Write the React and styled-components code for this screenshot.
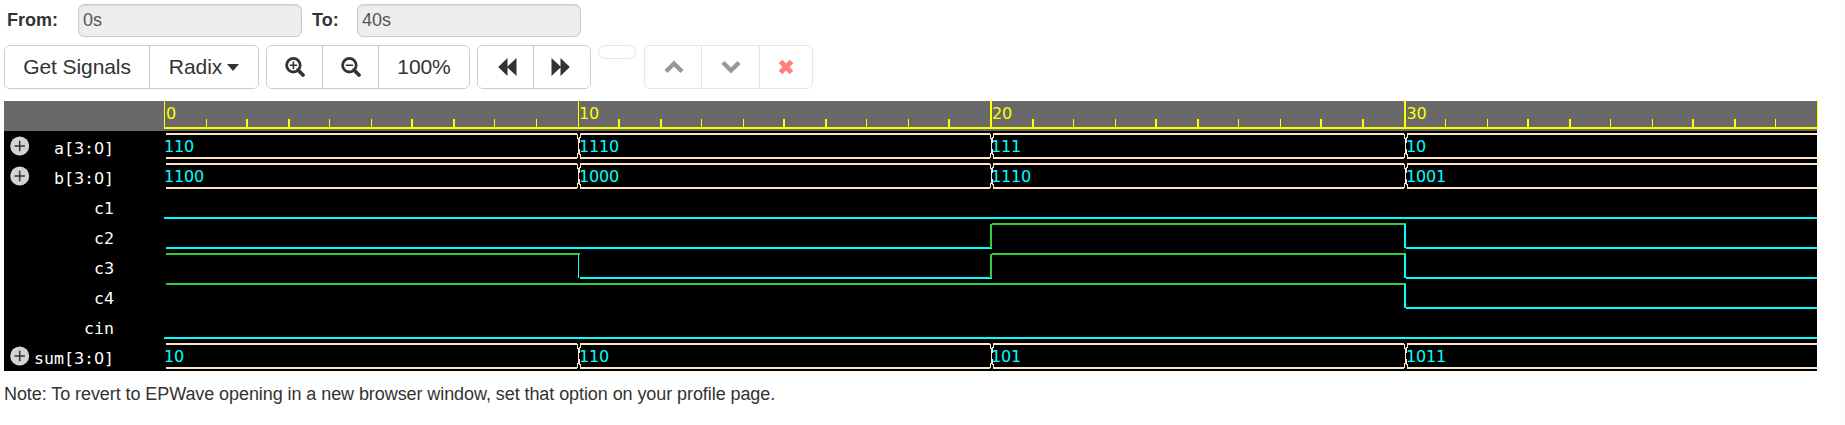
import React from "react";
import styled, { createGlobalStyle } from "styled-components";

const GlobalStyle = createGlobalStyle`
  * { box-sizing: border-box; }
  body { margin: 0; background: #fff; color: #333; font: 18px "Liberation Sans", Arial, sans-serif; }
`;

const Page = styled.main`
  height: 425px;
  padding: 4px 27px 0 4px;
  border-right: 5px solid #fcfcfc;
`;

const RangeBar = styled.form`
  display: flex;
  height: 33px;
`;

const FieldLabel = styled.label`
  width: ${(p) => p.$width}px;
  padding-left: ${(p) => p.$indent}px;
  font-weight: bold;
  line-height: 32px;
`;

const RangeField = styled.input`
  width: 224px;
  height: 33px;
  padding: 0 4px 1px;
  border: 1px solid #ccc;
  border-radius: 6px;
  background: #eee;
  box-shadow: inset 0 1px 2px rgba(0, 0, 0, 0.1);
  color: #555;
  font: inherit;
`;

const Toolbar = styled.div`
  display: flex;
  align-items: flex-start;
  margin-top: 8px;
  height: 56px;
`;

const ButtonGroup = styled.div`
  display: flex;
  height: ${(p) => p.$height || 44}px;
  margin-right: ${(p) => p.$gap ?? 7}px;
  border: 1px solid #ccc;
  border-radius: ${(p) => (p.$height ? 7 : 6)}px;
  overflow: hidden;
  opacity: ${(p) => (p.$disabled ? 0.5 : 1)};
  ${(p) => p.$height && "width: 38px;"}
`;

const ToolButton = styled.button`
  display: flex;
  align-items: center;
  justify-content: center;
  width: ${(p) => p.$width}px;
  padding: 0 ${(p) => p.$padRight || 0}px 0 ${(p) => p.$padLeft || 0}px;
  border: 0;
  background: #fff;
  color: #333;
  font: 21px "Liberation Sans", Arial, sans-serif;
  letter-spacing: -0.08px;
  & + & { border-left: 1px solid #ccc; }
`;

const Caret = styled.span`
  margin-left: 5px;
  border-top: 7px solid #333;
  border-left: 6px solid transparent;
  border-right: 6px solid transparent;
`;

const Viewer = styled.section`
  width: 1814px;
`;

const Row = styled.div`
  display: flex;
  height: 30px;
  width: 1813px;
  background: ${(p) => (p.$ruler ? "#696969" : "#000")};
`;

const NameCell = styled.div`
  display: flex;
  flex: 0 0 160px;
  padding-left: 6px;
`;

const Name = styled.span`
  display: flex;
  justify-content: flex-end;
  width: 84px;
  height: 30px;
  color: #fff;
  font: 16.6px/35px "DejaVu Sans Mono", monospace;
  white-space: pre;
`;

const Digit = styled.span`
  font: 16px/35px "DejaVu Sans", sans-serif;
  letter-spacing: -0.18px;
`;

const Trace = styled.svg`
  flex: none;
  display: block;
  overflow: visible;
`;

const TraceText = styled.text`
  font: 16px "DejaVu Sans", sans-serif;
  letter-spacing: -0.18px;
  fill: ${(p) => p.$color};
`;

const ExpandIcon = styled.svg`
  flex: none;
  width: 20px;
  height: 30px;
`;

const Note = styled.p`
  margin: 12px 0 0;
  line-height: 22px;
  letter-spacing: -0.076px;
`;

const CYAN = "#00ffff";
const GREEN = "#32cd32";
const BISQUE = "#ffe4c4";
const YELLOW = "#ffff00";
const END = 1653;
const VALUE_X = [0, 415, 827, 1242];

const tickCenter = (k) => 0.5 + 1.5 * Math.round((2755 * k) / 100);

function Tick({ k }) {
  const c = tickCenter(k);
  const thin = c % 1 !== 0;
  const major = k % 10 === 0;
  return <rect x={thin ? c - 0.5 : c - 1} y={major ? 0 : 18} width={thin ? 1 : 2} height={major ? 27 : 8} fill={YELLOW} />;
}

function Ruler() {
  return (
    <Trace width={END} height="30">
      {Array.from({ length: 41 }, (_, k) => <Tick key={k} k={k} />)}
      <rect x="0" y="26" width={END + 1} height="2" fill={YELLOW} />
      {[0, 10, 20, 30].map((n, i) => (
        <TraceText key={n} x={[2, 415, 828, 1242.5][i]} y="18" $color={YELLOW}>{n}</TraceText>
      ))}
    </Trace>
  );
}

function Bus({ values }) {
  const edges = [2, 414, 827, 1241];
  return (
    <Trace width={END} height="30" shapeRendering="crispEdges">
      {edges.map((x, i) => {
        const start = i ? x + 2 : x;
        const end = i < 3 ? edges[i + 1] - 1 : END;
        return (
          <g key={x} fill={BISQUE}>
            <rect x={start} y="2" width={end - start} height="2" />
            <rect x={start} y="26" width={end - start} height="2" />
            {i > 0 && [
              [0, 3, 5], [1, 7, 5], [1, 11, 8], [1, 18, 5], [0, 22, 5],
              [3, 3, 4], [2, 6, 6], [2, 18, 6], [3, 23, 4],
            ].map(([dx, y, h]) => <rect key={`${dx}-${y}`} x={x + dx - 1} y={y} width="1" height={h} />)}
          </g>
        );
      })}
      {values.map((v, i) => <TraceText key={i} x={VALUE_X[i]} y="21" $color={CYAN}>{v}</TraceText>)}
    </Trace>
  );
}

function Wire({ levels }) {
  const edges = [levels.every((v) => !v) ? 0 : 2, 416, 828, 1242, END];
  return (
    <Trace width={END} height="30" shapeRendering="crispEdges">
      {levels.map((level, i) => {
        const color = level ? GREEN : CYAN;
        const changed = i > 0 && levels[i - 1] !== level;
        return (
          <g key={i} fill={color}>
            <rect x={edges[i]} y={level ? 2 : 26} width={edges[i + 1] - edges[i]} height="2" />
            {changed && <rect x={edges[i] - 2} y="3" width={i === 1 ? 1 : 2} height="24" />}
          </g>
        );
      })}
    </Trace>
  );
}

const SIGNALS = [
  { name: "a[3:0]", values: ["110", "1110", "111", "10"] },
  { name: "b[3:0]", values: ["1100", "1000", "1110", "1001"] },
  { name: "c1", levels: [0, 0, 0, 0] },
  { name: "c2", levels: [0, 0, 1, 0] },
  { name: "c3", levels: [1, 0, 1, 0] },
  { name: "c4", levels: [1, 1, 1, 0] },
  { name: "cin", levels: [0, 0, 0, 0] },
  { name: "sum[3:0]", values: ["10", "110", "101", "1011"] },
];

function SignalRow({ name, values, levels }) {
  return (
    <Row>
      <NameCell>
        <ExpandIcon viewBox="0 0 20 30">
          {values && (
            <>
              <circle cx="9.7" cy="15" r="9.5" fill="#d3d3d3" />
              <path d="M4.5 15h10.4M9.7 9.8v10.4" stroke="#333" strokeWidth="1.5" />
            </>
          )}
        </ExpandIcon>
        <Name>
          {name.split(/(\d)/).map((part, i) => (i % 2 ? <Digit key={i}>{part}</Digit> : part))}
        </Name>
      </NameCell>
      {values ? <Bus values={values} /> : <Wire levels={levels} />}
    </Row>
  );
}

function ZoomIcon({ plus }) {
  return (
    <svg width="20" height="20" viewBox="0 0 20 20" fill="none" stroke="#333">
      <circle cx="8.4" cy="8.2" r="6.8" strokeWidth="2.8" />
      <path d="M13 13l5 5" strokeWidth="3.6" strokeLinecap="round" />
      <path d={plus ? "M4.7 8.2h7.4M8.4 4.5v7.4" : "M4.7 8.2h7.4"} strokeWidth="1.6" />
    </svg>
  );
}

function SkipIcon({ forward }) {
  return (
    <svg width="19" height="18" viewBox="0 0 19 18" fill="#333">
      <path d={forward ? "M0.5 0L9.5 8.6V0L18.8 9 9.5 18V9.4L0.5 18Z" : "M18.5 0L9.5 8.6V0L0.2 9 9.5 18V9.4L18.5 18Z"} />
    </svg>
  );
}

function ChevronIcon({ down }) {
  return (
    <svg width="20" height="14" viewBox="0 0 20 14" fill="none" stroke="#333" strokeWidth="4.4">
      <path d={down ? "M2 2.5L10 10.5 18 2.5" : "M2 11.5L10 3.5 18 11.5"} />
    </svg>
  );
}

function RemoveIcon() {
  return (
    <svg width="16" height="16" viewBox="0 0 16 16" stroke="#f00" strokeWidth="5">
      <path d="M2.5 2.5l11 11M13.5 2.5l-11 11" />
    </svg>
  );
}

export default function App() {
  return (
    <Page>
      <GlobalStyle />
      <RangeBar>
        <FieldLabel $width={74} $indent={3}>From:</FieldLabel>
        <RangeField readOnly value="0s" />
        <FieldLabel $width={55} $indent={10}>To:</FieldLabel>
        <RangeField readOnly value="40s" />
      </RangeBar>
      <Toolbar>
        <ButtonGroup>
          <ToolButton $width={144}>Get Signals</ToolButton>
          <ToolButton $width={109}>Radix<Caret /></ToolButton>
        </ButtonGroup>
        <ButtonGroup>
          <ToolButton $width={55}><ZoomIcon plus /></ToolButton>
          <ToolButton $width={56}><ZoomIcon /></ToolButton>
          <ToolButton $width={91}>100%</ToolButton>
        </ButtonGroup>
        <ButtonGroup>
          <ToolButton $width={55} $padLeft={3}><SkipIcon /></ToolButton>
          <ToolButton $width={57} $padRight={3}><SkipIcon forward /></ToolButton>
        </ButtonGroup>
        <ButtonGroup $height={14} $gap={8} $disabled />
        <ButtonGroup $disabled>
          <ToolButton $width={56} $padLeft={1}><ChevronIcon /></ToolButton>
          <ToolButton $width={58}><ChevronIcon down /></ToolButton>
          <ToolButton $width={53}><RemoveIcon /></ToolButton>
        </ButtonGroup>
      </Toolbar>
      <Viewer>
        <Row $ruler>
          <NameCell />
          <Ruler />
        </Row>
        {SIGNALS.map((s) => <SignalRow key={s.name} {...s} />)}
      </Viewer>
      <Note>Note: To revert to EPWave opening in a new browser window, set that option on your profile page.</Note>
    </Page>
  );
}
